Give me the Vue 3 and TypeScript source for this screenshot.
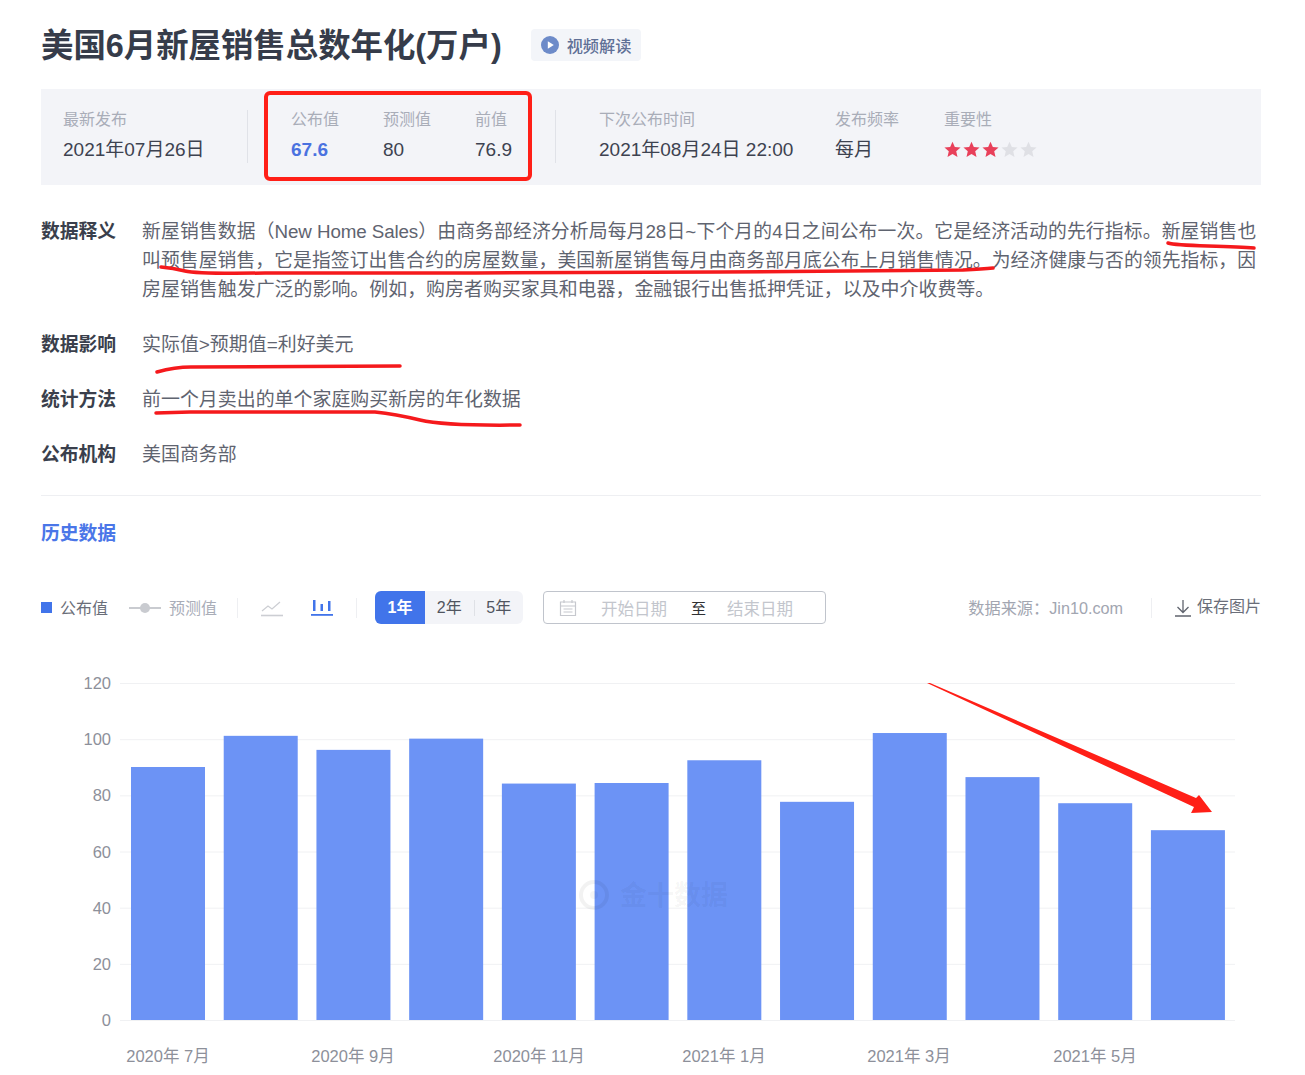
<script setup lang="ts">
interface Stat {
  label: string
  value: string
  width: number
  strong?: boolean
}

const latest: Stat[] = [{ label: '最新发布', value: '2021年07月26日', width: 184 }]
const figures: Stat[] = [
  { label: '公布值', value: '67.6', width: 92, strong: true },
  { label: '预测值', value: '80', width: 92 },
  { label: '前值', value: '76.9', width: 80 }
]
const schedule: Stat[] = [
  { label: '下次公布时间', value: '2021年08月24日 22:00', width: 236 },
  { label: '发布频率', value: '每月', width: 109 }
]

const descLines = [
  '新屋销售数据（New Home Sales）由商务部经济分析局每月28日~下个月的4日之间公布一次。它是经济活动的先行指标。新屋销售也',
  '叫预售屋销售，它是指签订出售合约的房屋数量，美国新屋销售每月由商务部月底公布上月销售情况。为经济健康与否的领先指标，因',
  '房屋销售触发广泛的影响。例如，购房者购买家具和电器，金融银行出售抵押凭证，以及中介收费等。'
]

const rows = [
  { title: '数据影响', text: '实际值>预期值=利好美元' },
  { title: '统计方法', text: '前一个月卖出的单个家庭购买新房的年化数据' },
  { title: '公布机构', text: '美国商务部' }
]

const stars = [true, true, true, false, false]
const starPath = 'M8 .6l2.2 5 5.4.5-4.1 3.6 1.2 5.3L8 12.2 3.3 15l1.2-5.3L.4 6.1l5.4-.5z'

// chart coordinates are relative to the svg, which starts at x=41, y=640
const chartBottom = 380
const unit = 2.808
const yTicks = [0, 20, 40, 60, 80, 100, 120]
const values = [90.1, 101.2, 96.2, 100.2, 84.2, 84.4, 92.5, 77.7, 102.2, 86.5, 77.2, 67.6]
const bars = values.map((v, i) => ({
  x: 90 + i * 92.72,
  y: chartBottom - v * unit,
  h: v * unit
}))
const xLabels = [
  { x: 127, text: '2020年 7月' },
  { x: 312, text: '2020年 9月' },
  { x: 498, text: '2020年 11月' },
  { x: 683, text: '2021年 1月' },
  { x: 868, text: '2021年 3月' },
  { x: 1054, text: '2021年 5月' }
]
</script>

<template>
  <div class="page">
    <div class="title_row">
      <h1>美国6月新屋销售总数年化(万户)</h1>
      <div class="video_btn">
        <svg width="18" height="18" viewBox="0 0 18 18">
          <circle cx="9" cy="9" r="9" fill="#6d8bc9" />
          <path d="M6.8 5.2l6 3.8-6 3.8z" fill="#fff" />
        </svg>
        <span>视频解读</span>
      </div>
    </div>

    <div class="panel">
      <div class="group">
        <div v-for="s in latest" :key="s.label" class="stat" :style="{ width: s.width + 'px' }">
          <div class="stat_label">{{ s.label }}</div>
          <div class="stat_value">{{ s.value }}</div>
        </div>
      </div>
      <i class="panel_line"></i>
      <div class="group figures">
        <div v-for="s in figures" :key="s.label" class="stat" :style="{ width: s.width + 'px' }">
          <div class="stat_label">{{ s.label }}</div>
          <div class="stat_value" :class="{ strong: s.strong }">{{ s.value }}</div>
        </div>
      </div>
      <i class="panel_line"></i>
      <div class="group schedule">
        <div v-for="s in schedule" :key="s.label" class="stat" :style="{ width: s.width + 'px' }">
          <div class="stat_label">{{ s.label }}</div>
          <div class="stat_value">{{ s.value }}</div>
        </div>
        <div class="stat">
          <div class="stat_label">重要性</div>
          <div class="stars">
            <svg v-for="(on, i) in stars" :key="i" width="17" height="17" viewBox="0 0 16 16">
              <path :d="starPath" :fill="on ? '#e8405a' : '#dfe0e5'" />
            </svg>
          </div>
        </div>
      </div>
    </div>

    <div class="info first">
      <div class="info_title">数据释义</div>
      <div class="info_text">
        <div v-for="(line, i) in descLines" :key="i" class="desc_line" :class="{ fill: i < 2, tight: i === 0 }">{{ line }}</div>
      </div>
    </div>
    <div v-for="r in rows" :key="r.title" class="info">
      <div class="info_title">{{ r.title }}</div>
      <div class="info_text">{{ r.text }}</div>
    </div>

    <div class="split"></div>
    <div class="history">历史数据</div>

    <div class="toolbar">
      <i class="legend_box"></i>
      <span class="legend_on">公布值</span>
      <svg class="legend_line" width="32" height="12" viewBox="0 0 32 12">
        <path d="M0 6h32" stroke="#c9cbd0" stroke-width="2" />
        <circle cx="16" cy="6" r="5" fill="#c9cbd0" />
      </svg>
      <span class="legend_off">预测值</span>
      <i class="bar_line line_a"></i>
      <svg class="type_line" width="22" height="18" viewBox="0 0 22 18" fill="none">
        <path d="M1 12l6-5 4 3 8-7" stroke="#ccced3" stroke-width="1.2" />
        <path d="M0 16.500h22" stroke="#ccced3" stroke-width="1.600" />
      </svg>
      <svg class="type_bar" width="22" height="18" viewBox="0 0 22 18">
        <path d="M2 1h2.500v11H2zM9.500 5H12v7H9.500zM17 2h2.500v10H17z" fill="#4174ea" />
        <path d="M0 15h22v1.800H0z" fill="#4174ea" />
      </svg>
      <i class="bar_line line_b"></i>
      <div class="tabs">
        <span class="tab active">1年</span>
        <span class="tab">2年</span>
        <i class="tab_line"></i>
        <span class="tab">5年</span>
      </div>
      <div class="dates">
        <svg width="18" height="18" viewBox="0 0 18 18" fill="none" stroke="#c6c8ce" stroke-width="1.200">
          <path d="M1.500 3h15v13.500h-15zM1.500 7h15M5 1v3M13 1v3M4.500 10h9M4.500 13h9" />
        </svg>
        <span class="date_hint start">开始日期</span>
        <span class="date_to">至</span>
        <span class="date_hint end">结束日期</span>
      </div>
      <span class="source">数据来源：Jin10.com</span>
      <i class="bar_line line_c"></i>
      <svg class="save_icon" width="16" height="18" viewBox="0 0 16 18" fill="none" stroke="#60646e" stroke-width="1.300">
        <path d="M8 1v12M2.500 8L8 13.500 13.500 8M0 17h16" />
      </svg>
      <span class="save">保存图片</span>
    </div>

    <svg class="chart" width="1220" height="435" viewBox="0 0 1220 435">
      <g v-for="t in yTicks" :key="t">
        <path :d="`M79 ${chartBottom - t * unit + 0.5}H1194`" stroke="#f0f1f3" />
        <text x="70" :y="chartBottom - t * unit + 6" text-anchor="end" class="axis">{{ t }}</text>
      </g>
      <rect v-for="(b, i) in bars" :key="i" :x="b.x" :y="b.y" width="74" :height="b.h" fill="#6c93f5" />
      <g class="mark">
        <circle cx="553" cy="255" r="13" fill="none" stroke="#000" stroke-opacity=".05" stroke-width="4" />
        <circle cx="553" cy="255" r="4" fill="#000" fill-opacity=".04" />
        <text x="579" y="265" class="mark_text">金十数据</text>
      </g>
      <text v-for="l in xLabels" :key="l.text" :x="l.x" y="422" text-anchor="middle" class="axis">{{ l.text }}</text>
    </svg>

    <!-- hand drawn marks on top of the screenshot -->
    <svg class="marks" width="1305" height="1075" viewBox="0 0 1305 1075">
      <rect x="266" y="93" width="264" height="86" rx="4" fill="none" stroke="#ff1f17" stroke-width="4" />
      <g fill="none" stroke="#f5191c" stroke-width="3.500" stroke-linecap="round" stroke-linejoin="round">
        <path d="M1168 243q6 2 40 3t46 2" />
        <path d="M161 267q12 1 24 4t80 2l210 0 245-1 243-2q20-1 30-2" />
        <path d="M157 372q18-5 34-5l209-1" />
        <path d="M156 413l34-1 185 0q20 2 45 8t100 5" />
      </g>
      <path d="M927 683L930 683L1196 798L1199 795L1212 812L1191 813L1194 807Z" fill="#ff1f17" />
    </svg>
  </div>
</template>

<style scoped>
.page {
  position: relative;
  width: 1305px;
  height: 1075px;
  overflow: hidden;
  box-sizing: border-box;
  padding: 0 44px 0 41px;
  background: #fff;
  font-family: "Liberation Sans", "Noto Sans CJK SC", sans-serif;
  font-size: 18.8px;
  color: #5f6470;
}

.title_row {
  display: flex;
  align-items: center;
  height: 89px;
}

.title_row h1 {
  margin: 0 0 4px;
  font-size: 32.4px;
  font-weight: 700;
  color: #363c4a;
}

.video_btn {
  display: flex;
  align-items: center;
  gap: 8px;
  height: 32px;
  margin-left: 29px;
  padding: 0 10px;
  border-radius: 4px;
  background: #f3f5f9;
  font-size: 16.2px;
  font-weight: 500;
  color: #5f7096;
}

.panel {
  display: flex;
  align-items: center;
  box-sizing: border-box;
  height: 96px;
  padding: 0 0 2px 22px;
  background: #f3f4f8;
}

.group {
  display: flex;
}

.figures {
  padding-left: 43px;
}

.schedule {
  padding-left: 43px;
}

.panel_line {
  display: block;
  width: 1px;
  height: 53px;
  background: #e0e2e8;
}

.stat_label {
  height: 24px;
  line-height: 24px;
  font-size: 16px;
  color: #a9adb8;
}

.stat_value {
  height: 30px;
  margin-top: 3px;
  line-height: 30px;
  font-size: 19px;
  color: #3d4250;
}

.stat_value.strong {
  font-weight: 700;
  color: #4a72e0;
}

.stars {
  display: flex;
  gap: 2px;
  height: 30px;
  margin-top: 3px;
  align-items: center;
}

.info {
  display: flex;
  margin-top: 26px;
  line-height: 29px;
}

.info.first {
  margin-top: 32px;
}

.info_title {
  flex: none;
  width: 101px;
  font-weight: 700;
  color: #3a3f4c;
}

.info_text {
  width: 1114px;
  font-size: 18.95px;
}

.desc_line {
  white-space: nowrap;
}

.desc_line.fill {
  font-size: 18.8px;
  text-align: justify;
  text-align-last: justify;
}

.desc_line.tight {
  letter-spacing: -0.17px;
}

.split {
  height: 1px;
  margin-top: 26px;
  background: #eeeff2;
}

.history {
  margin-top: 23px;
  line-height: 29px;
  font-weight: 700;
  color: #4a76e8;
}

.toolbar {
  display: flex;
  align-items: center;
  height: 33px;
  margin-top: 43px;
  font-size: 16px;
}

.legend_box {
  display: block;
  width: 11px;
  height: 11px;
  background: #4174ea;
}

.legend_on {
  margin: 0 0 2px 8px;
  color: #6a6e79;
}

.legend_line {
  margin-left: 21px;
}

.legend_off {
  margin: 0 0 2px 8px;
  color: #a9adb8;
}

.bar_line {
  display: block;
  width: 1px;
  height: 20px;
  background: #eeeff2;
}

.line_a {
  margin-left: 20px;
}

.type_line {
  margin-left: 23px;
}

.type_bar {
  margin-left: 28px;
}

.line_b {
  margin-left: 23px;
}

.tabs {
  display: flex;
  align-items: center;
  height: 33px;
  margin-left: 18px;
  border-radius: 6px;
  background: #f3f4f8;
  overflow: hidden;
  color: #50555f;
}

.tab {
  width: 48.500px;
  line-height: 34px;
  text-align: center;
}

.tab.active {
  width: 50px;
  background: #4174ea;
  color: #fff;
  font-weight: 700;
}

.tab_line {
  display: block;
  width: 1px;
  height: 16px;
  background: #dfe1e6;
}

.dates {
  display: flex;
  align-items: center;
  box-sizing: border-box;
  width: 283px;
  height: 33px;
  margin-left: 20px;
  padding-left: 15px;
  border: 1px solid #c0c4cc;
  border-radius: 4px;
}

.date_hint {
  font-size: 16.5px;
  color: #c3c6cd;
}

.date_hint.start {
  margin-left: 24px;
}

.date_to {
  margin: 0 21px 0 24px;
  font-size: 15px;
  color: #303133;
}

.source {
  margin: 0 0 2px auto;
  font-size: 16.2px;
  color: #a2a6b1;
}

.line_c {
  margin-left: 28px;
}

.save_icon {
  margin-left: 23px;
}

.save {
  margin: 0 0 5px 6px;
  color: #6a6e79;
}

.chart {
  display: block;
  margin-top: 16px;
}

.axis {
  font-size: 16.5px;
  fill: #8d909a;
}

.mark_text {
  font-size: 27px;
  font-weight: 700;
  fill: #000;
  fill-opacity: 0.05;
}

.marks {
  position: absolute;
  left: 0;
  top: 0;
  pointer-events: none;
}
</style>
